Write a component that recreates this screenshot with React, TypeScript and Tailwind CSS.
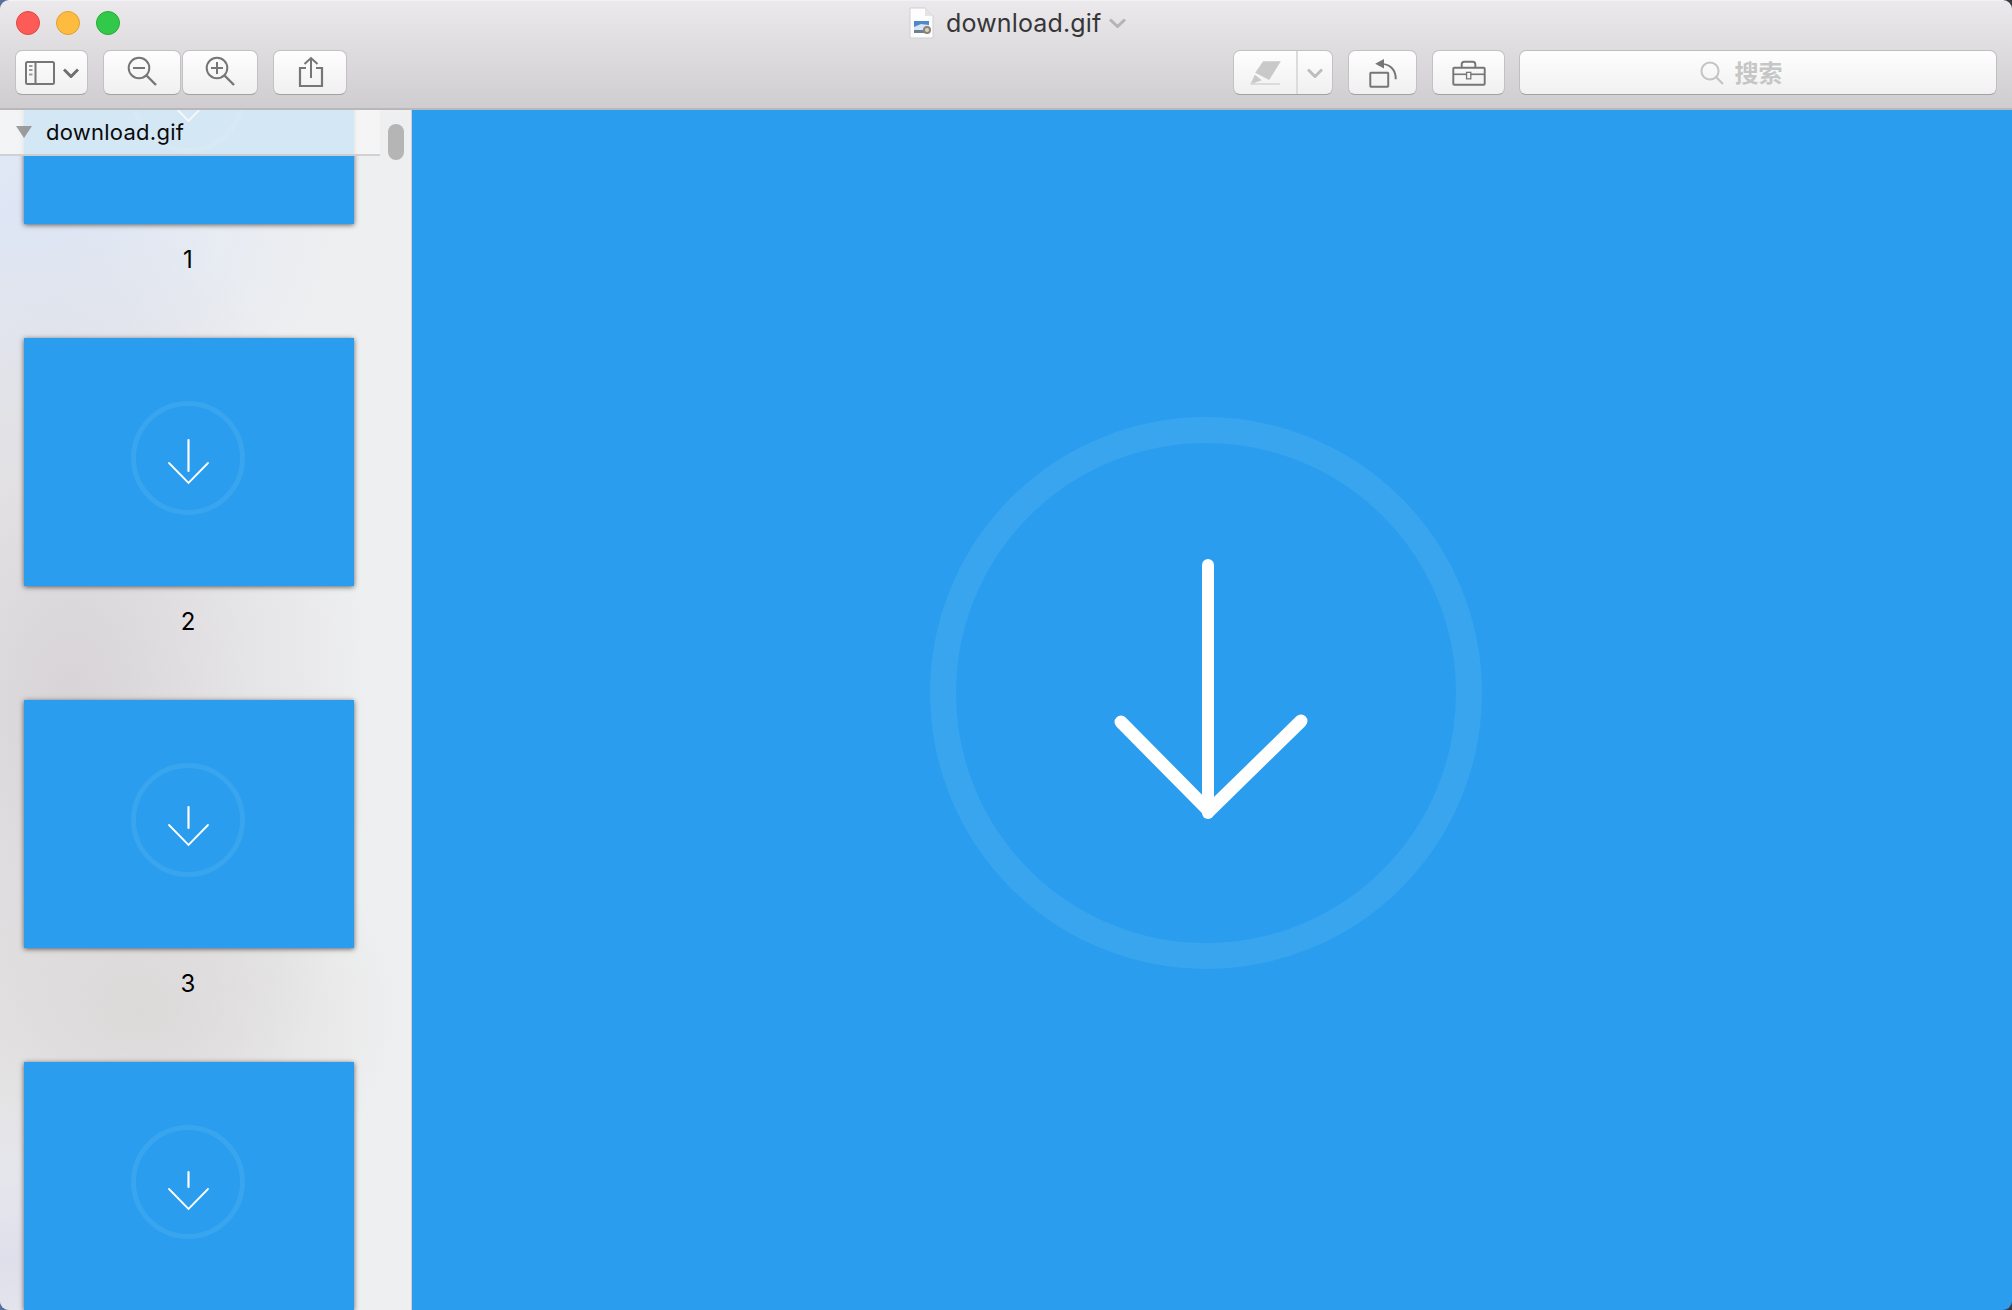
const ICON = "#767676";

function Btn({ w, children, className = "" }: { w: string; children: React.ReactNode; className?: string }) {
  return (
    <div
      className={`${w} ${className} h-[45px] shrink-0 flex items-center justify-center rounded-[7px] border border-[#c3c1c3] border-b-[#a3a1a3] bg-gradient-to-b from-[#fefefe] to-[#f0f0f0]`}
    >
      {children}
    </div>
  );
}

function Chevron({ color = "#6f6f6f", w = 14, h = 7, sw = 3 }: { color?: string; w?: number; h?: number; sw?: number }) {
  return (
    <svg width={w + 2} height={h + 3} viewBox={`-1 -1.5 ${w + 2} ${h + 3}`}>
      <path d={`M0 0 L${w / 2} ${h} L${w} 0`} fill="none" stroke={color} strokeWidth={sw} />
    </svg>
  );
}

function Magnifier({ plus }: { plus?: boolean }) {
  return (
    <svg width="32" height="32" viewBox="0 0 32 32" className="mb-[2px] ml-[2px]">
      <circle cx="12" cy="12" r="10.3" fill="none" stroke={ICON} strokeWidth="2" />
      <path d="M19.5 19.5 L29 29" stroke={ICON} strokeWidth="2.4" />
      <path d="M6 12 H18" stroke={ICON} strokeWidth="2" />
      {plus && <path d="M12 6 V18" stroke={ICON} strokeWidth="2" />}
    </svg>
  );
}

function FileIcon() {
  return (
    <svg width="25" height="32" viewBox="0 0 25 32" className="shrink-0">
      <path d="M1 1 H16 L24 9 V31 H1 Z" fill="#fdfdfd" stroke="#cfcfcf" strokeWidth="1" />
      <path d="M16 1 V9 H24 Z" fill="#e4e4e4" />
      <rect x="5" y="14" width="15" height="9" fill="#4d88c9" />
      <path d="M5 20 L12 17 L20 18 V23 H5 Z" fill="#d7e4f2" />
      <rect x="5" y="23" width="12" height="3" fill="#6d7f97" />
      <circle cx="18" cy="23" r="4" fill="#8c8374" />
      <circle cx="18" cy="23" r="2" fill="#d8d2c4" />
    </svg>
  );
}

function Thumb({ lineTop, lineBottom, chevY, tip, n }: { lineTop: number; lineBottom: number; chevY: number; tip: number; n?: number }) {
  return (
    <div className="w-[330px] shrink-0 ml-[24px] mb-[64px]">
      <div className="w-[330px] h-[248px] bg-[#2a9def] shadow-[0_1px_5px_rgba(0,0,0,0.6)]">
        <svg width="330" height="248" viewBox="0 0 330 248">
          <circle cx="164" cy="120" r="54.5" fill="none" stroke="#39a5ef" strokeWidth="5" />
          <path d={`M164.5 ${lineTop} V${lineBottom}`} stroke="#ffffff" strokeWidth="2.2" strokeLinecap="round" />
          <path d={`M145 ${chevY} L164.5 ${tip} L184 ${chevY}`} fill="none" stroke="#ffffff" strokeWidth="1.8" strokeLinecap="round" />
        </svg>
      </div>
      {n !== undefined && (
        <div className="mt-[22px] h-[28px] leading-[28px] w-[328px] text-center text-[24px] text-black font-['Inter','Liberation_Sans',sans-serif]">
          {n}
        </div>
      )}
    </div>
  );
}

export default function App() {
  return (
    <div className="w-[2012px] h-[1310px] bg-gradient-to-r from-[#56709f] via-[#4a4a50] to-[#3b3b3f] overflow-hidden font-['Inter','Liberation_Sans',sans-serif]">
      <div className="w-full h-full rounded-[9px] overflow-hidden flex flex-col">
        {/* Title bar and toolbar */}
        <div className="h-[110px] shrink-0 bg-gradient-to-b from-[#ebe9ec] to-[#cfcdcf] border-t border-t-[#f3f2f4] border-b-2 border-b-[#b9b7b9] pl-[15px] pr-[15px]">
          <div className="h-[43px] flex items-center">
            <div className="ml-[1px] flex items-center gap-[16px]">
              <div className="w-[24px] h-[24px] rounded-full bg-[#fc5b57] border border-[#e2463f]" />
              <div className="w-[24px] h-[24px] rounded-full bg-[#fdbb3f] border border-[#e1a02d]" />
              <div className="w-[24px] h-[24px] rounded-full bg-[#32c849] border border-[#27aa35]" />
            </div>
            <div className="ml-[789px] flex items-center">
              <FileIcon />
              <span className="ml-[12px] text-[25px] leading-[30px] text-[#363638] tracking-[0.15px]">download.gif</span>
              <span className="ml-[8px] flex items-center">
                <Chevron color="#b5b3b5" w={15} h={7} sw={3} />
              </span>
            </div>
          </div>
          <div className="mt-[6px] flex items-start">
            <Btn w="w-[73px]">
              <div className="flex items-center gap-[7px]">
                <svg width="32" height="26" viewBox="0 0 32 26">
                  <rect x="2" y="2" width="28" height="22" rx="1.5" fill="none" stroke={ICON} strokeWidth="2" />
                  <path d="M11.5 2 V24" stroke={ICON} strokeWidth="2" />
                  <path d="M5 6 H8.5 M5 10 H8.5 M5 14.5 H8.5" stroke="#9a9a9a" strokeWidth="1.8" />
                </svg>
                <Chevron />
              </div>
            </Btn>
            <Btn w="w-[78px]" className="ml-[15px]">
              <Magnifier />
            </Btn>
            <Btn w="w-[76px]" className="ml-[1px]">
              <Magnifier plus />
            </Btn>
            <Btn w="w-[74px]" className="ml-[15px]">
              <svg width="26" height="32" viewBox="0 0 26 32" className="mb-[2px] ml-[1px]">
                <path d="M8 12 H2 V30 H24 V12 H18" fill="none" stroke={ICON} strokeWidth="2.2" />
                <path d="M13 22 V2 M6.5 8 L13 2 L19.5 8" fill="none" stroke={ICON} strokeWidth="2" />
              </svg>
            </Btn>
            <div className="ml-auto flex items-start">
              <div className="w-[100px] h-[45px] flex rounded-[7px] border border-[#c3c1c3] border-b-[#a3a1a3] bg-gradient-to-b from-[#fefefe] to-[#f0f0f0]">
                <div className="w-[64px] flex items-center justify-center border-r-2 border-r-[#dcdcdc]">
                  <svg width="37" height="30" viewBox="140 80 110 90">
                    <path d="M188 90 H241 L206 146 L164 124 Z" fill="#c9c9c9" />
                    <path d="M150 159 L163 130 L184 147 Z" fill="#c9c9c9" />
                    <path d="M150 158 H238" stroke="#d6d6d6" strokeWidth="5" />
                  </svg>
                </div>
                <div className="flex-1 flex items-center justify-center">
                  <Chevron color="#bdbdbd" />
                </div>
              </div>
              <Btn w="w-[69px]" className="ml-[15px]">
                <svg width="30" height="32" viewBox="500 76 92 94">
                  <rect x="507" y="122" width="55" height="43" rx="2" fill="none" stroke={ICON} strokeWidth="6" />
                  <path d="M542 95 C566 96 586 112 585 142" fill="none" stroke={ICON} strokeWidth="6" />
                  <path d="M522 95 L549 80 L549 109 Z" fill={ICON} />
                </svg>
              </Btn>
              <Btn w="w-[73px]" className="ml-[15px]">
                <svg width="34" height="26" viewBox="755 90 105 78">
                  <rect x="759" y="113" width="97" height="52" rx="3" fill="none" stroke={ICON} strokeWidth="6" />
                  <path d="M785 113 V102 Q785 94 793 94 H819 Q827 94 827 102 V113" fill="none" stroke={ICON} strokeWidth="6" />
                  <path d="M759 133 H856" stroke={ICON} strokeWidth="5" />
                  <rect x="800" y="127" width="13" height="20" fill="#f7f7f7" stroke={ICON} strokeWidth="4" />
                </svg>
              </Btn>
              <div className="ml-[14px] w-[478px] h-[45px] flex items-center justify-center gap-[11px] rounded-[7px] border border-[#c0bec0] border-b-[#a3a1a3] bg-gradient-to-b from-[#fefefe] to-[#f1f1f1]">
                <svg width="24" height="24" viewBox="0 0 24 24" className="mt-[1px]">
                  <circle cx="10" cy="10" r="8.6" fill="none" stroke="#c4c4c4" strokeWidth="2" />
                  <path d="M16.5 16.5 L23 23" stroke="#c4c4c4" strokeWidth="2.2" />
                </svg>
                <span className="mr-[34px] mb-[1px] text-[24px] leading-[30px] font-bold text-[#c6c6c6] font-['Noto_Sans_CJK_SC',sans-serif]">搜索</span>
              </div>
            </div>
          </div>
        </div>

        {/* Body */}
        <div className="flex-1 flex min-h-0">
          <div className="relative w-[412px] shrink-0 overflow-hidden border-r border-r-[#cfcfcf] bg-[#eeeff0] bg-[radial-gradient(ellipse_200px_170px_at_10px_1150px,#dedfea,transparent),radial-gradient(ellipse_260px_200px_at_140px_900px,#dcd9d9,transparent),radial-gradient(ellipse_300px_520px_at_70px_600px,#d7d3d7,transparent),radial-gradient(ellipse_320px_280px_at_30px_100px,#dde6f6,transparent)]">
            <div className="flex flex-col mt-[-134px]">
              <Thumb n={1} lineTop={102} lineBottom={133} chevY={125} tip={145} />
              <Thumb n={2} lineTop={102} lineBottom={133} chevY={125} tip={145} />
              <Thumb n={3} lineTop={107} lineBottom={128} chevY={125} tip={145} />
              <Thumb lineTop={110} lineBottom={125} chevY={127} tip={147} />
            </div>
            {/* Translucent group header over the scrolled list */}
            <div className="absolute top-0 left-0 w-[380px] h-[46px] flex items-center bg-[#f6f6f6]/[.84] border-b-2 border-b-[#c8c8c8]/80">
              <svg width="16" height="12" viewBox="0 0 16 12" className="ml-[16px]">
                <path d="M0 0 H16 L8 12 Z" fill="#8d8d8d" fillOpacity="0.85" />
              </svg>
              <span className="ml-[14px] text-[22px] leading-[28px] text-[#0a0a0a] tracking-[0.25px]">download.gif</span>
            </div>
            {/* Scrollbar */}
            <div className="absolute top-[14px] left-[388px] w-[16px] h-[36px] rounded-full bg-[#b5b5b6]" />
          </div>
          <div className="flex-1 bg-[#2a9def] flex items-center justify-center">
            <svg width="600" height="600" viewBox="0 0 600 600" className="mr-[12px] mb-[34px]">
              <circle cx="300" cy="300" r="263" fill="none" stroke="#39a5ef" strokeWidth="26" />
              <path d="M302 172 V420" stroke="#ffffff" strokeWidth="12" strokeLinecap="round" />
              <path d="M215 329 L303 418 L395 328" fill="none" stroke="#ffffff" strokeWidth="13" strokeLinecap="round" strokeLinejoin="round" />
            </svg>
          </div>
        </div>
      </div>
    </div>
  );
}
